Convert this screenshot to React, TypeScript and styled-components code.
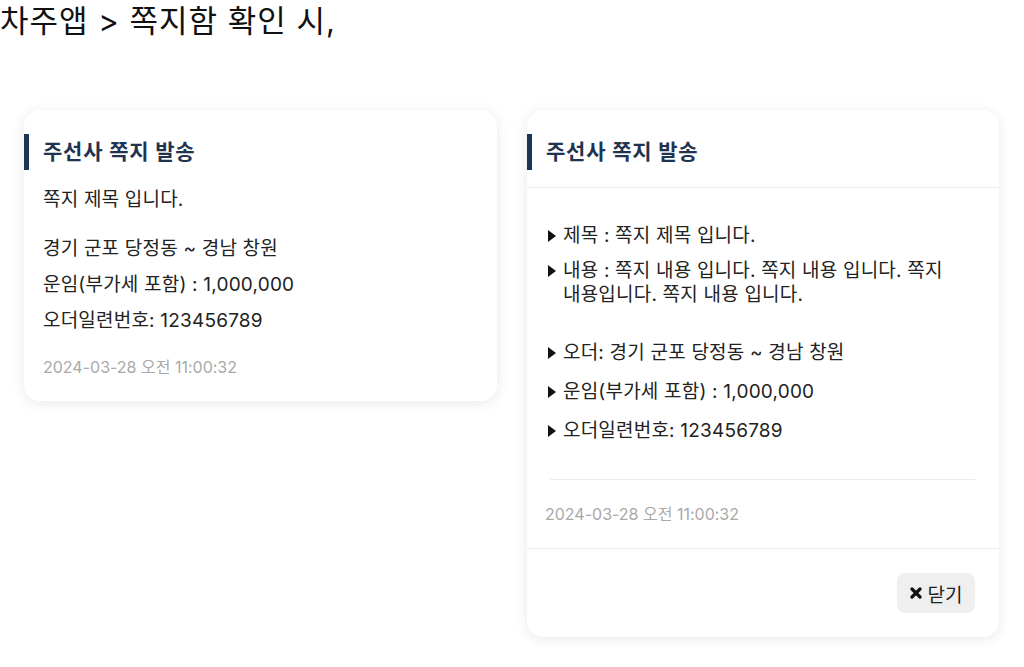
import React from "react";
import styled, { createGlobalStyle } from "styled-components";

const FONT = `"Inter", "Noto Sans CJK KR", "Noto Sans", sans-serif`;

const Global = createGlobalStyle`
  html, body { margin: 0; padding: 0; background: #fff; }
  body { font-family: ${FONT}; color: #222; }
`;

const Page = styled.div`
  width: 1024px;
  height: 667px;
  overflow: hidden;
`;

const Heading = styled.h1`
  margin: 0;
  font-size: 31px;
  font-weight: 400;
  line-height: 42px;
  letter-spacing: 1px;
  color: #111;
`;

const Row = styled.div`
  display: flex;
  align-items: flex-start;
  gap: 30px;
  padding: 68px 0 0 24px;
`;

const Card = styled.div<{ $w: number }>`
  width: ${(p) => p.$w}px;
  background: #fff;
  border-radius: 16px;
  box-shadow: 0 2px 14px rgba(0, 0, 0, 0.09);
  display: flex;
  flex-direction: column;
`;

const TitleBar = styled.div<{ $divided?: boolean }>`
  display: flex;
  align-items: center;
  padding: 24px 0 ${(p) => (p.$divided ? "17px" : "0")} 0;
  border-bottom: ${(p) => (p.$divided ? "1px solid #ececec" : "none")};
`;

const Mark = styled.span`
  width: 5px;
  height: 36px;
  background: #1c3553;
  flex: none;
`;

const Title = styled.div`
  margin-left: 14px;
  font-size: 21px;
  font-weight: 700;
  line-height: 36px;
  color: #1f3450;
  letter-spacing: 0.8px;
`;

const Plain = styled.div`
  padding: 12px 24px 22px 19px;
  display: flex;
  flex-direction: column;
`;

const Line = styled.div<{ $top?: number }>`
  font-size: 19px;
  line-height: 36px;
  letter-spacing: 0.2px;
  margin-top: ${(p) => p.$top ?? 0}px;
  color: #222;
`;

const DateText = styled.div<{ $top?: number }>`
  font-size: 16px;
  line-height: 24px;
  color: #a9a9a9;
  margin-top: ${(p) => p.$top ?? 0}px;
`;

const Body = styled.div`
  padding: 36px 40px 0 21px;
  display: flex;
  flex-direction: column;
`;

const Item = styled.div<{ $gap: number }>`
  display: flex;
  align-items: flex-start;
  font-size: 19px;
  line-height: 24px;
  letter-spacing: 0.2px;
  color: #222;
  margin-bottom: ${(p) => p.$gap}px;
`;

const Bullet = styled.span`
  flex: none;
  width: 0;
  height: 0;
  margin: 6px 7px 0 0;
  border-top: 6px solid transparent;
  border-bottom: 6px solid transparent;
  border-left: 8px solid #111;
`;

const Divider = styled.div`
  height: 1px;
  background: #ececec;
  margin: 36px -16px 0 2px;
`;

const DateRow = styled.div`
  padding: 22px 0 22px 18px;
`;

const Footer = styled.div`
  border-top: 1px solid #ececec;
  padding: 24px 24px 24px 0;
  display: flex;
  justify-content: flex-end;
`;

const CloseButton = styled.button`
  width: 78px;
  height: 40px;
  border: none;
  border-radius: 8px;
  background: #efefef;
  display: flex;
  align-items: center;
  justify-content: center;
  gap: 6px;
  font-family: ${FONT};
  font-size: 19px;
  color: #222;
  padding: 0;
`;

const CrossIcon = () => (
  <svg width="12" height="12" viewBox="0 0 12 12" aria-hidden="true">
    <path d="M2 2 L10 10 M10 2 L2 10" stroke="#111" strokeWidth="3.2" strokeLinecap="round" />
  </svg>
);

export default function App() {
  return (
    <Page>
      <Global />
      <Heading>차주앱 &gt; 쪽지함 확인 시,</Heading>
      <Row>
        <Card $w={473}>
          <TitleBar>
            <Mark />
            <Title>주선사 쪽지 발송</Title>
          </TitleBar>
          <Plain>
            <Line>쪽지 제목 입니다.</Line>
            <Line $top={13}>경기 군포 당정동 ~ 경남 창원</Line>
            <Line>운임(부가세 포함) : 1,000,000</Line>
            <Line>오더일련번호: 123456789</Line>
            <DateText $top={16}>2024-03-28 오전 11:00:32</DateText>
          </Plain>
        </Card>
        <Card $w={472}>
          <TitleBar $divided>
            <Mark />
            <Title>주선사 쪽지 발송</Title>
          </TitleBar>
          <Body>
            <Item $gap={11}>
              <Bullet />
              <span>제목 : 쪽지 제목 입니다.</span>
            </Item>
            <Item $gap={34}>
              <Bullet />
              <span>내용 : 쪽지 내용 입니다. 쪽지 내용 입니다. 쪽지 내용입니다. 쪽지 내용 입니다.</span>
            </Item>
            <Item $gap={15}>
              <Bullet />
              <span>오더: 경기 군포 당정동 ~ 경남 창원</span>
            </Item>
            <Item $gap={15}>
              <Bullet />
              <span>운임(부가세 포함) : 1,000,000</span>
            </Item>
            <Item $gap={0}>
              <Bullet />
              <span>오더일련번호: 123456789</span>
            </Item>
            <Divider />
          </Body>
          <DateRow>
            <DateText>2024-03-28 오전 11:00:32</DateText>
          </DateRow>
          <Footer>
            <CloseButton>
              <CrossIcon />
              닫기
            </CloseButton>
          </Footer>
        </Card>
      </Row>
    </Page>
  );
}
